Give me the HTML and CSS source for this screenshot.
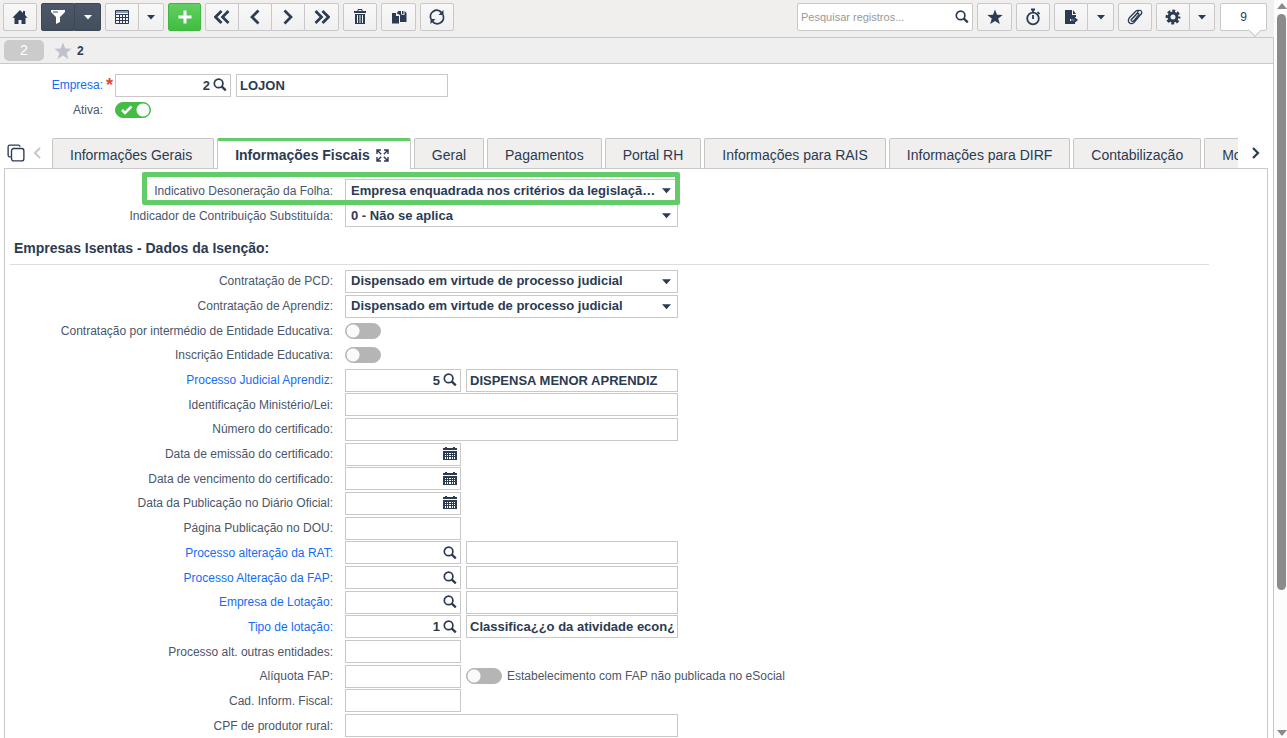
FILE: index.html
```html
<!DOCTYPE html>
<html lang="pt-BR">
<head>
<meta charset="utf-8">
<title>Empresa</title>
<link rel="stylesheet" href="styles.css">
</head>
<body>
<svg class="defs" aria-hidden="true">
  <symbol id="search" viewBox="0 0 14 14"><circle cx="5.6" cy="5.4" r="4.3" fill="none" stroke="currentColor" stroke-width="1.7"/><path d="M8.600 8.400l4.200 4" stroke="currentColor" stroke-width="2.300"/></symbol>
  <symbol id="calendar" viewBox="0 0 14 14"><path fill="currentColor" fill-rule="evenodd" d="M0 1h2V0h2v1h6V0h2v1h2v2H0zM0 4h14v9H0zM2 6v1h1V6zM4 6v1h1V6zM6 6v1h2V6zM9 6v1h1V6zM11 6v1h1V6zM2 8v1h1V8zM4 8v1h1V8zM6 8v1h2V8zM9 8v1h1V8zM11 8v1h1V8zM2 10v2h1v-2zM4 10v2h1v-2zM6 10v2h2v-2zM9 10v2h1v-2zM11 10v2h1v-2z"/></symbol>
  <symbol id="caret" viewBox="0 0 8 5"><path fill="currentColor" d="M0 0h8L4 4.600z"/></symbol>
  <symbol id="star" viewBox="0 0 16 16"><path fill="currentColor" d="M8 .5l2 5.300 5.700.200-4.500 3.500 1.600 5.500L8 11.900 3.200 15l1.600-5.500L.3 6 6 5.800z"/></symbol>
</svg>
<div class="app">
  <header class="toolbar">
    <button class="btn" aria-label="Início"><svg width="16" height="16" viewBox="0 0 16 16"><path fill="currentColor" d="M8 1l3 3V2h2v4l2.600 2.700H13.500V15H9.500v-4h-3v4h-4V8.700H.4z"/></svg></button>
    <div class="group dark">
      <button class="btn" aria-label="Filtrar"><svg width="16" height="16" viewBox="0 0 16 16"><path fill="currentColor" d="M1 1h14v2L10 8v5l-4 2V8L1 3z"/><path d="M3 3h5" stroke="#465261"/></svg></button>
      <button class="btn narrow" aria-label="Opções de filtro"><svg width="8" height="5"><use href="#caret"/></svg></button>
    </div>
    <div class="group">
      <button class="btn" aria-label="Grade"><svg width="16" height="16" viewBox="0 0 16 16"><path fill="none" stroke="currentColor" d="M1.500 1.500h13v13h-13zM1 3h14M1 5.500h14M1 8.500h14M1 11.500h14M5.500 5v9.500M8.500 5v9.500M11.500 5v9.500"/></svg></button>
      <button class="btn narrow" aria-label="Opções de grade"><svg width="8" height="5"><use href="#caret"/></svg></button>
    </div>
    <button class="btn add" aria-label="Novo"><svg width="16" height="16" viewBox="0 0 16 16"><path stroke="currentColor" stroke-width="3" d="M8 1.500v13M1.500 8h13"/></svg></button>
    <div class="group">
      <button class="btn" aria-label="Primeiro"><svg width="16" height="16" viewBox="0 0 16 16" class="line"><path d="M7.500 2l-6 6 6 6M14.500 2l-6 6 6 6"/></svg></button>
      <button class="btn" aria-label="Anterior"><svg width="16" height="16" viewBox="0 0 16 16" class="line"><path d="M11.500 1.500L5 8l6.500 6.500"/></svg></button>
      <button class="btn" aria-label="Próximo"><svg width="16" height="16" viewBox="0 0 16 16" class="line"><path d="M4.500 1.500L11 8l-6.500 6.500"/></svg></button>
      <button class="btn roomy" aria-label="Último"><svg width="16" height="16" viewBox="0 0 16 16" class="line"><path d="M1.500 2l6 6-6 6M8.500 2l6 6-6 6"/></svg></button>
    </div>
    <button class="btn" aria-label="Excluir"><svg width="14" height="16" viewBox="0 0 14 16"><path fill="none" stroke="currentColor" d="M5 2.500v-2h4v2"/><path fill="currentColor" d="M1 2h12v2H1z"/><path fill="currentColor" fill-rule="evenodd" d="M2 5h10v10H2zM4 6v8h1V6zM6.500 6v8h1V6zM9 6v8h1V6z"/></svg></button>
    <button class="btn roomy" aria-label="Duplicar"><svg width="16" height="16" viewBox="0 0 16 16"><path fill="currentColor" d="M1 4h4v3h3v7.500H1zM6 3.500L7.500 2H10v3.500l3.500.5V2l2 2v9H9V6L6 4.500zM11 2h1.500v3H11z"/></svg></button>
    <button class="btn" aria-label="Atualizar"><svg width="16" height="16" viewBox="0 0 16 16"><path fill="none" stroke="currentColor" stroke-width="1.800" d="M2 10A6.200 6.200 0 0 1 12.500 3.600M14 6a6.200 6.200 0 0 1-10.500 6.400"/><path fill="currentColor" d="M14.500 1v5h-5zM1.500 15v-5h5z"/></svg></button>
    <div class="query">
      <input type="text" aria-label="Pesquisar registros" placeholder="Pesquisar registros...">
      <svg width="14" height="14"><use href="#search"/></svg>
    </div>
    <button class="btn roomy" aria-label="Favoritos"><svg width="16" height="16"><use href="#star"/></svg></button>
    <button class="btn" aria-label="Cronômetro"><svg width="16" height="18" viewBox="0 0 16 18"><circle cx="8" cy="10.500" r="5.800" fill="none" stroke="currentColor" stroke-width="1.800"/><path stroke="currentColor" stroke-width="1.800" d="M8 7v4M8 1v4M6 1.500h4M12.500 4.200l2 1.800"/></svg></button>
    <div class="group export">
      <button class="btn" aria-label="Exportar"><svg width="16" height="16" viewBox="0 0 16 16"><path fill="currentColor" d="M2 1h7v5h4v2h-1v2H7v2h5v3H2z"/><path fill="currentColor" d="M10 1l3 4h-3zM8 10.300h3.500V8L15 11l-3.500 3v-2.300H8z"/></svg></button>
      <button class="btn narrow" aria-label="Opções de exportação"><svg width="8" height="5"><use href="#caret"/></svg></button>
    </div>
    <button class="btn" aria-label="Anexos"><svg width="16" height="16" viewBox="0 0 16 16"><path fill="none" stroke="currentColor" stroke-width="1.300" d="M5 10l5-5.200q1.600-1.200 2 .6L7 11.600q-2.200 1.700-3-.7l6.300-7q1-1.200.8-2.200 3.200-1.400 3.700 2-.3 1-1.200 2L7 13.500q-2.700 2.300-5 0-1.500-2.500.6-5L9 2q1.200-1 2.300-.6"/></svg></button>
    <div class="group">
      <button class="btn" aria-label="Configurações"><svg width="16" height="16" viewBox="0 0 16 16"><circle cx="8" cy="8" r="4" fill="none" stroke="currentColor" stroke-width="3"/><circle cx="8" cy="8" r="6.200" fill="none" stroke="currentColor" stroke-width="2.400" stroke-dasharray="2.900 1.970" stroke-dashoffset="1.450"/></svg></button>
      <button class="btn narrow" aria-label="Opções de configuração"><svg width="8" height="5"><use href="#caret"/></svg></button>
    </div>
    <button class="btn count">9</button>
  </header>
  <div class="records">
    <span class="badge">2</span>
    <svg width="18" height="18" viewBox="0 0 16 16"><use href="#star"/></svg>
    <strong>2</strong>
  </div>
  <form class="record">
    <div class="field">
      <label class="link" for="empresa">Empresa:</label><span class="required">*</span>
      <span class="box short"><input id="empresa" class="number" value="2"><svg width="14" height="14"><use href="#search"/></svg></span>
      <input class="box name" aria-label="Nome da empresa" value="LOJON">
    </div>
    <div class="field">
      <label for="ativa">Ativa:</label><span class="required"></span>
      <span class="toggle"><input type="checkbox" id="ativa" checked><svg width="12" height="10" viewBox="0 0 12 10"><path fill="none" stroke="#fff" stroke-width="2.500" d="M1 5l3 3 6.500-6.500"/></svg></span>
    </div>
  </form>
  <nav class="tabbar">
    <button class="plain" aria-label="Abas"><svg width="18" height="18" viewBox="0 0 16 16"><path fill="none" stroke="currentColor" stroke-width="1.200" d="M3.500 11.500H2.500Q1 11.500 1 10V2.500Q1 1 2.500 1H10q1.500 0 1.500 1.500"/><rect x="4" y="4" width="11" height="11" rx="2" fill="none" stroke="currentColor" stroke-width="1.200"/></svg></button>
    <button class="plain muted" aria-label="Abas anteriores"><svg width="8" height="12" viewBox="0 0 8 12"><path fill="none" stroke="currentColor" stroke-width="2" d="M7 1L2 6l5 5"/></svg></button>
    <div class="tabs">
      <button class="roomy">Informações Gerais</button>
      <button class="roomy active">Informações Fiscais<svg width="13" height="13" viewBox="0 0 13 13"><path fill="none" stroke="currentColor" stroke-width="1.400" d="M1 5V1h4M8 1h4v4M12 8v4H8M5 12H1V8M1 1l4.200 4.200M12 1L7.800 5.200M12 12L7.800 7.800M1 12l4.200-4.200"/></svg></button>
      <button>Geral</button>
      <button>Pagamentos</button>
      <button>Portal RH</button>
      <button>Informações para RAIS</button>
      <button>Informações para DIRF</button>
      <button>Contabilização</button>
      <button>Movimentos</button>
    </div>
    <button class="plain next" aria-label="Próximas abas"><svg width="8" height="12" viewBox="0 0 8 12"><path fill="none" stroke="currentColor" stroke-width="2.200" d="M1 1l5 5-5 5"/></svg></button>
  </nav>
  <main class="panel">
    <div class="rows top">
      <div class="field highlight"><label for="f1">Indicativo Desoneração da Folha:</label><span class="select"><select id="f1"><option>Empresa enquadrada nos critérios da legislação vigente</option></select><svg width="9" height="6"><use href="#caret"/></svg></span></div>
      <div class="field"><label for="f2">Indicador de Contribuição Substituída:</label><span class="select"><select id="f2"><option>0 - Não se aplica</option></select><svg width="9" height="6"><use href="#caret"/></svg></span></div>
    </div>
    <h2>Empresas Isentas - Dados da Isenção:</h2>
    <div class="rows fill">
      <div class="field"><label for="f3">Contratação de PCD:</label><span class="select"><select id="f3"><option>Dispensado em virtude de processo judicial</option></select><svg width="9" height="6"><use href="#caret"/></svg></span></div>
      <div class="field"><label for="f4">Contratação de Aprendiz:</label><span class="select"><select id="f4"><option>Dispensado em virtude de processo judicial</option></select><svg width="9" height="6"><use href="#caret"/></svg></span></div>
      <div class="field"><label for="f5">Contratação por intermédio de Entidade Educativa:</label><span class="toggle"><input type="checkbox" id="f5"></span></div>
      <div class="field"><label for="f6">Inscrição Entidade Educativa:</label><span class="toggle"><input type="checkbox" id="f6"></span></div>
      <div class="field"><label class="link" for="f7">Processo Judicial Aprendiz:</label><span class="box short"><input id="f7" class="number" value="5"><svg width="14" height="14"><use href="#search"/></svg></span><input class="box name" aria-label="Descrição do processo" value="DISPENSA MENOR APRENDIZ"></div>
      <div class="field"><label for="f8">Identificação Ministério/Lei:</label><input class="box wide" id="f8"></div>
      <div class="field"><label for="f9">Número do certificado:</label><input class="box wide" id="f9"></div>
      <div class="field"><label for="f10">Data de emissão do certificado:</label><span class="box short"><input id="f10"><svg width="14" height="14"><use href="#calendar"/></svg></span></div>
      <div class="field"><label for="f11">Data de vencimento do certificado:</label><span class="box short"><input id="f11"><svg width="14" height="14"><use href="#calendar"/></svg></span></div>
      <div class="field"><label for="f12">Data da Publicação no Diário Oficial:</label><span class="box short"><input id="f12"><svg width="14" height="14"><use href="#calendar"/></svg></span></div>
      <div class="field"><label for="f13">Página Publicação no DOU:</label><input class="box short" id="f13"></div>
      <div class="field"><label class="link" for="f14">Processo alteração da RAT:</label><span class="box short"><input id="f14" class="number"><svg width="14" height="14"><use href="#search"/></svg></span><input class="box name" aria-label="Descrição RAT"></div>
      <div class="field"><label class="link" for="f15">Processo Alteração da FAP:</label><span class="box short"><input id="f15" class="number"><svg width="14" height="14"><use href="#search"/></svg></span><input class="box name" aria-label="Descrição FAP"></div>
      <div class="field"><label class="link" for="f16">Empresa de Lotação:</label><span class="box short"><input id="f16" class="number"><svg width="14" height="14"><use href="#search"/></svg></span><input class="box name" aria-label="Nome da lotação"></div>
      <div class="field"><label class="link" for="f17">Tipo de lotação:</label><span class="box short"><input id="f17" class="number" value="1"><svg width="14" height="14"><use href="#search"/></svg></span><input class="box name" aria-label="Descrição do tipo" value="Classifica¿¿o da atividade econ¿mica"></div>
      <div class="field"><label for="f18">Processo alt. outras entidades:</label><input class="box short" id="f18"></div>
      <div class="field"><label for="f19">Alíquota FAP:</label><input class="box short" id="f19"><span class="toggle"><input type="checkbox" id="f20"></span><label class="after" for="f20">Estabelecimento com FAP não publicada no eSocial</label></div>
      <div class="field"><label for="f21">Cad. Inform. Fiscal:</label><input class="box short" id="f21"></div>
      <div class="field"><label for="f22">CPF de produtor rural:</label><input class="box wide" id="f22"></div>
    </div>
  </main>
</div>
<div class="scrollbar" aria-hidden="true">
  <svg width="10" height="6" viewBox="0 0 10 6"><path fill="#8b8b8b" d="M5 0l5 6H0z"/></svg>
  <div class="track"><div class="thumb"></div></div>
  <svg width="10" height="6" viewBox="0 0 10 6"><path fill="#8b8b8b" d="M0 0h10L5 6z"/></svg>
</div>
</body>
</html>
```
FILE: styles.css
```css
*, *::before, *::after { box-sizing: border-box; }
body {
  margin: 0;
  display: flex;
  min-height: 100vh;
  background: #fff;
  color: #2b3b52;
  font: 12px/16px "Liberation Sans", Arial, sans-serif;
}
svg { display: block; flex: none; }
button, input, select { font: inherit; color: inherit; margin: 0; }
.defs { position: absolute; width: 0; height: 0; }

.app {
  flex: 1;
  min-width: 0;
  display: flex;
  flex-direction: column;
  border-right: 1px solid #c8c8c8;
}

/* toolbar */
.toolbar {
  display: flex;
  gap: 4px;
  padding: 3px 7px 6px 3px;
  background: #f0efee;
  border-bottom: 1px solid #c9c9c9;
  margin-right: -1px;
}
.btn {
  display: flex;
  align-items: center;
  justify-content: center;
  width: 34px;
  height: 28px;
  padding: 0;
  border: 1px solid #c8c8c8;
  border-radius: 2px;
  background: linear-gradient(#f8f8f8, #f0f0f0);
}
.btn.roomy { width: 35px; }
.group { display: flex; }
.group .btn + .btn { margin-left: -1px; border-radius: 0 2px 2px 0; }
.btn.narrow { width: 26px; }
.dark .narrow, .export .narrow { width: 27px; }
.dark .btn { color: #fff; background: linear-gradient(#4c586a, #434e5c); border-color: #3d4856; }
.btn.add { width: 33px; color: #fff; background: linear-gradient(#62cf62, #40bd40); border-color: #40b840; }
.line { fill: none; stroke: currentColor; stroke-width: 2.700; }
.query {
  display: flex;
  align-items: center;
  width: 176px;
  height: 28px;
  margin-left: auto;
  padding: 0 3px;
  border: 1px solid #c8c8c8;
  border-radius: 2px;
  background: #fff;
}
.query input {
  flex: 1;
  min-width: 0;
  padding: 0;
  border: 0;
  outline: 0;
  background: none;
  font-size: 11px;
}
.query input::placeholder { color: #999; opacity: 1; }
.btn.count {
  position: relative;
  width: 47px;
  margin-left: 1px;
  background: #fff;
}
.btn.count::after {
  content: "";
  position: absolute;
  right: 6px;
  bottom: -5px;
  width: 10px;
  height: 10px;
  background: #fff;
  border: solid #c8c8c8;
  border-width: 0 1px 1px 0;
  transform: rotate(45deg);
}

.records {
  display: flex;
  align-items: center;
  height: 26px;
  padding-left: 4px;
  background: #efefef;
  border-bottom: 1px solid #c9c9c9;
  color: #bfc2ca;
}
.records strong { margin-left: 5px; color: #2b3b52; }
.badge {
  width: 40px;
  height: 21px;
  margin-right: 10px;
  border-radius: 5px;
  background: #cbcbcb;
  color: #fff;
  font-size: 14px;
  line-height: 21px;
  text-align: center;
}

/* fields */
.field { display: flex; align-items: center; }
.field label { flex: none; color: #4a5669; text-align: right; }
.field label.link { color: #146cf5; }
.box {
  height: 23px;
  border: 1px solid #c8c8c8;
  background: #fff;
  padding: 0 3px;
  outline: 0;
  font-size: 13px;
  font-weight: 700;
}
.short { display: flex; align-items: center; width: 116px; padding: 0 3px 0 0; }
.short input {
  flex: 1;
  min-width: 0;
  height: 20px;
  padding: 0 3px;
  border: 0;
  outline: 0;
  background: none;
}
.short .number { text-align: right; }
.name { width: 212px; margin-left: 5px; }
.wide { width: 333px; }
.toggle { position: relative; width: 36px; height: 16px; }
.toggle input {
  appearance: none;
  display: block;
  width: 36px;
  height: 16px;
  border: 1px solid #b5b5b5;
  border-radius: 8px;
  background: radial-gradient(circle at 7px 7px, #fafafa 6px, transparent 7px), #b5b5b5;
}
.toggle input:checked {
  border-color: #44bd44;
  background: radial-gradient(circle at 27px 7px, #fafafa 6px, transparent 7px), #44bd44;
}
.toggle svg { position: absolute; left: 6px; top: 3px; pointer-events: none; }

.record { display: flex; flex-direction: column; gap: 1px; padding: 9px 0 16px; }
.record .field { height: 24px; }
.record label { width: 103px; }
.record .required { width: 12px; padding-left: 3px; color: #e04a3a; font-size: 18px; font-weight: 700; }

/* tabs */
.tabbar { display: flex; align-items: center; height: 30px; padding: 0 5px 0 7px; }
.plain { padding: 0; border: 0; background: none; }
.plain.muted { width: 26px; padding-left: 8px; color: #c8c8c8; }
.plain.next { width: 30px; padding-left: 14px; }
.tabs { flex: 1; min-width: 0; height: 31px; display: flex; gap: 3px; overflow: hidden; margin-left: 1px; z-index: 1; }
.tabs button {
  display: flex;
  flex: none;
  align-items: center;
  gap: 6px;
  height: 30px;
  padding: 3px 17px 0;
  border: 1px solid #c9c5c5;
  border-bottom: 0;
  border-radius: 2px 2px 0 0;
  background: #f0efee;
  font-size: 14px;
}
.tabs .roomy { padding-right: 21px; }
.tabs .active { height: 31px; padding-top: 1px; border-top: 3px solid #62cd68; background: #fff; font-weight: 700; }

/* panel */
.panel {
  flex: 1;
  display: flex;
  flex-direction: column;
  margin: 0 5px 0 4px;
  border: solid #c8c8c8;
  border-width: 1px 1px 0;
}
.panel .field > label:first-child { width: 328px; margin-right: 12px; }
.panel .field .after { margin-left: 5px; }
.panel .box + .toggle { margin-left: 5px; }
.top { padding-top: 9px; }
.top .field { height: 25px; }
.select { position: relative; width: 333px; }
.select select {
  appearance: none;
  display: block;
  width: 100%;
  height: 23px;
  padding: 0 20px 0 5px;
  border: 1px solid #c8c8c8;
  border-radius: 0;
  background: #fff;
  font-size: 13px;
  font-weight: 700;
  overflow: hidden;
  text-overflow: ellipsis;
}
.select svg { position: absolute; right: 7px; top: 9px; pointer-events: none; }
.highlight { position: relative; z-index: 1; }
.highlight::after {
  content: "";
  position: absolute;
  left: 137px;
  top: -6px;
  width: 538px;
  height: 33px;
  border: 5px solid #62cd68;
  border-radius: 2px;
  pointer-events: none;
}
.panel h2 {
  margin: 8px 58px 4px 5px;
  padding: 4px 4px 8px;
  border-bottom: 1px solid #dedede;
  font-size: 14px;
  line-height: 16px;
}
.fill { flex: 1; display: grid; grid-auto-rows: minmax(24px, 1fr); }

/* scrollbar */
.scrollbar {
  display: flex;
  flex-direction: column;
  align-items: center;
  gap: 5px;
  width: 13px;
  padding: 3px 0 2px 2px;
  background: #fcfcfc;
}
.track { flex: 1; width: 9px; }
.thumb { height: 81%; border-radius: 5px; background: #8b8b8b; }
```
